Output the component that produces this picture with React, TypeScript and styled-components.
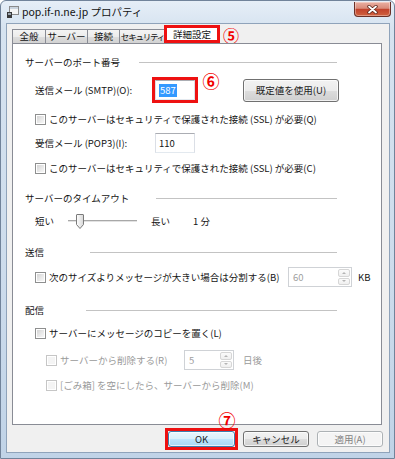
import React from "react";
import styled, { createGlobalStyle } from "styled-components";

const GlobalStyle = createGlobalStyle`
  html, body { margin: 0; padding: 0; background: #ffffff; }
  body {
    font-family: "Noto Sans CJK JP", "Noto Sans", sans-serif;
    font-size: 9.5px;
    color: #141414;
  }
`;

const Window = styled.div`
  width: 395px;
  height: 459px;
  box-sizing: border-box;
  border: 1px solid #71839a;
  border-radius: 6px 6px 0 0;
  background: linear-gradient(180deg, #e6eef7 0%, #d6e3f0 6%, #cddcec 60%, #c0d3e7 100%);
  display: flex;
  flex-direction: column;
`;

const TitleBar = styled.div`
  height: 22px;
  flex: none;
  display: flex;
  align-items: flex-start;
  padding-left: 6px;
`;

const TitleIcon = styled.svg`
  margin-top: 5px;
  flex: none;
`;

const TitleText = styled.span`
  margin-left: 3px;
  line-height: 22px;
  font-size: 10.5px;
  color: #111;
`;

const CloseButton = styled.div`
  margin-left: auto;
  margin-right: 3px;
  margin-top: 1px;
  width: 37px;
  height: 15px;
  box-sizing: border-box;
  border: 1px solid #6a3027;
  border-top: none;
  border-radius: 0 0 4px 4px;
  background: linear-gradient(180deg, #eab0a2 0%, #d98b7a 45%, #c2432c 52%, #d0623f 100%);
  box-shadow: inset 0 0 0 1px rgba(255, 255, 255, 0.35);
  display: flex;
  align-items: center;
  justify-content: center;
`;

const Client = styled.div`
  margin: 0 4px 5px 5px;
  height: 430px;
  box-sizing: border-box;
  border: 1px solid #8fa3ba;
  background: #f0f0f0;
  display: flex;
  flex-direction: column;
`;

const TabStrip = styled.div`
  height: 19px;
  flex: none;
  display: flex;
  align-items: flex-end;
  padding-left: 5px;
`;

const Tab = styled.div<{ $w: number; $tight?: boolean }>`
  width: ${(p) => p.$w}px;
  height: 14px;
  box-sizing: border-box;
  border: 1px solid #898c95;
  border-bottom: none;
  margin-right: -1px;
  background: linear-gradient(180deg, #f4f4f4 0%, #ececec 50%, #dedede 51%, #d2d2d2 100%);
  text-align: center;
  line-height: 13px;
  font-size: ${(p) => (p.$tight ? "8.5px" : "9.5px")};
  letter-spacing: ${(p) => (p.$tight ? "-1.2px" : "0")};
  white-space: nowrap;
`;

const SelectedTab = styled.div`
  width: 56px;
  height: 18px;
  box-sizing: border-box;
  margin-left: -1px;
  border: 3px solid #ee1111;
  background: #ffffff;
  text-align: center;
  line-height: 12px;
  font-size: 9.5px;
  position: relative;
  z-index: 1;
`;

const Annot = styled.span<{ $size?: number }>`
  display: inline-flex;
  justify-content: center;
  align-items: center;
  width: 18px;
  height: 18px;
  flex: none;
  color: #f20000;
  font-weight: 700;
  font-size: ${(p) => p.$size ?? 17}px;
  line-height: 1;
`;

const TabAnnot = styled(Annot)`
  margin-left: 2px;
  align-self: center;
  margin-bottom: -2px;
`;

const Panel = styled.div`
  margin-left: 5px;
  width: 370px;
  height: 382px;
  flex: none;
  box-sizing: border-box;
  border: 1px solid #898c95;
  background: #ffffff;
  display: flex;
  flex-direction: column;
`;

const Row = styled.div<{ $mt: number; $h?: number; $pl?: number }>`
  display: flex;
  align-items: center;
  margin-top: ${(p) => p.$mt}px;
  height: ${(p) => p.$h ?? 20}px;
  padding-left: ${(p) => p.$pl ?? 22}px;
  flex: none;
  white-space: nowrap;
`;

const Header = styled.div<{ $mt: number }>`
  display: flex;
  align-items: center;
  margin-top: ${(p) => p.$mt}px;
  margin-left: 12px;
  width: 312px;
  height: 12px;
  flex: none;
`;

const HeaderLabel = styled.span<{ $w: number }>`
  width: ${(p) => p.$w}px;
  flex: none;
  white-space: nowrap;
`;

const HeaderLine = styled.div`
  flex: 1;
  height: 1px;
  background: #c3c3c3;
`;

const FieldLabel = styled.span<{ $w: number; $disabled?: boolean }>`
  width: ${(p) => p.$w}px;
  flex: none;
  display: flex;
  align-items: center;
  color: ${(p) => (p.$disabled ? "#9a9a9a" : "inherit")};
`;

const RedBox = styled.div`
  box-sizing: border-box;
  border: 3px solid #ee1111;
  flex: none;
  display: flex;
  position: relative;
`;

const TextInput = styled.div<{ $w: number }>`
  width: ${(p) => p.$w}px;
  height: 20px;
  box-sizing: border-box;
  border: 1px solid #abadb3;
  border-left-color: #dbdfe6;
  border-right-color: #dbdfe6;
  border-bottom-color: #e3e9ef;
  background: #ffffff;
  display: flex;
  align-items: center;
  padding-left: 3px;
  flex: none;
`;

const Selected = styled.span`
  background: #3399ff;
  color: #ffffff;
  padding: 1px 1px;
  line-height: 11px;
`;

const NumberAnnot = styled(Annot)`
  align-self: flex-start;
  margin-top: -6px;
  margin-left: 4px;
`;

const PushButton = styled.div<{ $w: number; $h?: number; $variant?: "default" | "disabled" }>`
  width: ${(p) => p.$w}px;
  height: ${(p) => p.$h ?? 23}px;
  box-sizing: border-box;
  flex: none;
  border: 1px solid
    ${(p) => (p.$variant === "default" ? "#3c7fb1" : p.$variant === "disabled" ? "#adb2b5" : "#707070")};
  border-radius: 3px;
  background: ${(p) =>
    p.$variant === "default"
      ? "linear-gradient(180deg, #eaf6fd 0%, #d9f0fc 50%, #bee6fd 51%, #a7d9f5 100%)"
      : p.$variant === "disabled"
      ? "#f4f4f4"
      : "linear-gradient(180deg, #f2f2f2 0%, #ebebeb 50%, #dddddd 51%, #cfcfcf 100%)"};
  box-shadow: inset 0 0 0 1px rgba(255, 255, 255, 0.7);
  color: ${(p) => (p.$variant === "disabled" ? "#838383" : "#1b1b1b")};
  display: flex;
  align-items: center;
  justify-content: center;
  white-space: nowrap;
`;

const DefaultsButton = styled(PushButton)`
  margin-left: 23px;
`;

const Check = styled.span<{ $disabled?: boolean }>`
  flex: none;
  box-sizing: border-box;
  width: 11px;
  height: 11px;
  margin-right: 3px;
  border: 1px solid ${(p) => (p.$disabled ? "#c6c6c6" : "#8e8f8f")};
  background: ${(p) =>
    p.$disabled ? "#f4f4f4" : "linear-gradient(135deg, #cfcfcf 0%, #e9e9e9 55%, #fbfbfb 100%)"};
  box-shadow: inset 0 0 0 1px #ffffff;
`;

const CheckText = styled.span<{ $disabled?: boolean }>`
  color: ${(p) => (p.$disabled ? "#9a9a9a" : "inherit")};
`;

const SliderGrid = styled.div`
  display: grid;
  grid-template-columns: 33px 83px 42px auto;
  align-items: center;
  height: 100%;
`;

const Track = styled.div`
  position: relative;
  width: 69px;
  height: 20px;
  display: flex;
  align-items: center;
`;

const Groove = styled.div`
  width: 100%;
  height: 1px;
  border-top: 1px solid #a8a8a8;
  border-bottom: 1px solid #ffffff;
  background: #e2e2e2;
`;

const Thumb = styled.svg`
  position: absolute;
  left: 8px;
  top: 3px;
`;

const Spinner = styled.div<{ $w: number }>`
  width: ${(p) => p.$w}px;
  height: 20px;
  box-sizing: border-box;
  border: 1px solid #cfd2d6;
  background: #ffffff;
  display: flex;
  align-items: stretch;
  flex: none;
  padding: 1px;
`;

const SpinValue = styled.span`
  flex: 1;
  display: flex;
  align-items: center;
  padding-left: 3px;
  color: #a0a0a0;
`;

const SpinColumn = styled.div`
  width: 12px;
  display: flex;
  flex-direction: column;
  gap: 1px;
`;

const SpinButton = styled.div<{ $up?: boolean }>`
  flex: 1;
  box-sizing: border-box;
  border: 1px solid #d6d6d6;
  border-radius: 2px;
  background: linear-gradient(180deg, #fbfbfb, #efefef);
  display: flex;
  align-items: center;
  justify-content: center;

  &::after {
    content: "";
    width: 0;
    height: 0;
    border-left: 2px solid transparent;
    border-right: 2px solid transparent;
    ${(p) => (p.$up ? "border-bottom: 2px solid #b4b4b4;" : "border-top: 2px solid #b4b4b4;")}
  }
`;

const Unit = styled.span<{ $ml: number; $disabled?: boolean }>`
  margin-left: ${(p) => p.$ml}px;
  color: ${(p) => (p.$disabled ? "#9a9a9a" : "inherit")};
`;

const Footer = styled.div`
  flex: 1;
  display: flex;
  justify-content: flex-end;
  align-items: center;
  padding: 3px 6px 2px 0;
`;

const OkFrame = styled(RedBox)`
  margin-right: 5px;
`;

const FooterAnnot = styled(Annot)`
  position: absolute;
  left: 50px;
  top: -21px;
`;

const FooterGap = styled.div`
  width: 8px;
  flex: none;
`;

const CheckRow = ({
  mt,
  pl,
  disabled,
  children,
}: {
  mt: number;
  pl?: number;
  disabled?: boolean;
  children: React.ReactNode;
}) => (
  <Row $mt={mt} $pl={pl}>
    <Check $disabled={disabled} />
    <CheckText $disabled={disabled}>{children}</CheckText>
  </Row>
);

const SpinBox = ({ w, value }: { w: number; value: string }) => (
  <Spinner $w={w}>
    <SpinValue>{value}</SpinValue>
    <SpinColumn>
      <SpinButton $up />
      <SpinButton />
    </SpinColumn>
  </Spinner>
);

export default function App() {
  return (
    <>
      <GlobalStyle />
      <Window>
        <TitleBar>
          <TitleIcon width="12" height="12" viewBox="0 0 12 12">
            <rect x="2.5" y="0.5" width="9" height="8" fill="#f4f4f4" stroke="#8a8a8a" />
            <rect x="3" y="1" width="8" height="2" fill="#c9d3de" />
            <rect x="0" y="6" width="5" height="6" fill="#3a3a3a" />
            <rect x="1" y="7" width="3" height="2" fill="#9aa4ae" />
          </TitleIcon>
          <TitleText>pop.if-n.ne.jp プロパティ</TitleText>
          <CloseButton>
            <svg width="11" height="9" viewBox="0 0 11 9">
              <path d="M2 1.5 L9 7.5 M9 1.5 L2 7.5" stroke="#5c2419" strokeWidth="3.4" strokeLinecap="round" />
              <path d="M2 1.5 L9 7.5 M9 1.5 L2 7.5" stroke="#ffffff" strokeWidth="1.8" strokeLinecap="round" />
            </svg>
          </CloseButton>
        </TitleBar>

        <Client>
          <TabStrip>
            <Tab $w={34}>全般</Tab>
            <Tab $w={43}>サーバー</Tab>
            <Tab $w={33}>接続</Tab>
            <Tab $w={47} $tight>
              セキュリティ
            </Tab>
            <SelectedTab>詳細設定</SelectedTab>
            <TabAnnot $size={16}>⑤</TabAnnot>
          </TabStrip>

          <Panel>
            <Header $mt={12}>
              <HeaderLabel $w={114}>サーバーのポート番号</HeaderLabel>
              <HeaderLine />
            </Header>

            <Row $mt={9} $h={26}>
              <FieldLabel $w={117}>送信メール (SMTP)(O):</FieldLabel>
              <RedBox>
                <TextInput $w={40}>
                  <Selected>587</Selected>
                </TextInput>
              </RedBox>
              <NumberAnnot>⑥</NumberAnnot>
              <DefaultsButton $w={96}>既定値を使用(U)</DefaultsButton>
            </Row>

            <CheckRow mt={6}>このサーバーはセキュリティで保護された接続 (SSL) が必要(Q)</CheckRow>

            <Row $mt={4}>
              <FieldLabel $w={120}>受信メール (POP3)(I):</FieldLabel>
              <TextInput $w={40}>110</TextInput>
            </Row>

            <CheckRow mt={5}>このサーバーはセキュリティで保護された接続 (SSL) が必要(C)</CheckRow>

            <Header $mt={14}>
              <HeaderLabel $w={131}>サーバーのタイムアウト</HeaderLabel>
              <HeaderLine />
            </Header>

            <Row $mt={7}>
              <SliderGrid>
                <span>短い</span>
                <Track>
                  <Groove />
                  <Thumb width="8" height="15" viewBox="0 0 8 15">
                    <defs>
                      <linearGradient id="thumbFill" x1="0" y1="0" x2="1" y2="0">
                        <stop offset="0" stopColor="#ffffff" />
                        <stop offset="1" stopColor="#d6d6d6" />
                      </linearGradient>
                    </defs>
                    <path
                      d="M1 0.5 H7 Q7.5 0.5 7.5 1 V10.5 L4 14.5 L0.5 10.5 V1 Q0.5 0.5 1 0.5 Z"
                      fill="url(#thumbFill)"
                      stroke="#7a7a7a"
                    />
                  </Thumb>
                </Track>
                <span>長い</span>
                <span>1 分</span>
              </SliderGrid>
            </Row>

            <Header $mt={15}>
              <HeaderLabel $w={65}>送信</HeaderLabel>
              <HeaderLine />
            </Header>

            <Row $mt={9}>
              <FieldLabel $w={253}>
                <Check />
                <CheckText>次のサイズよりメッセージが大きい場合は分割する(B)</CheckText>
              </FieldLabel>
              <SpinBox w={64} value="60" />
              <Unit $ml={6}>KB</Unit>
            </Row>

            <Header $mt={17}>
              <HeaderLabel $w={61}>配信</HeaderLabel>
              <HeaderLine />
            </Header>

            <CheckRow mt={7}>サーバーにメッセージのコピーを置く(L)</CheckRow>

            <Row $mt={7} $pl={33}>
              <FieldLabel $w={138} $disabled>
                <Check $disabled />
                サーバーから削除する(R)
              </FieldLabel>
              <SpinBox w={50} value="5" />
              <Unit $ml={9} $disabled>
                日後
              </Unit>
            </Row>

            <CheckRow mt={5} pl={33} disabled>
              [ごみ箱] を空にしたら、サーバーから削除(M)
            </CheckRow>
          </Panel>

          <Footer>
            <OkFrame>
              <PushButton $w={67} $h={16} $variant="default">
                OK
              </PushButton>
              <FooterAnnot>⑦</FooterAnnot>
            </OkFrame>
            <PushButton $w={66} $h={16}>
              キャンセル
            </PushButton>
            <FooterGap />
            <PushButton $w={66} $h={16} $variant="disabled">
              適用(A)
            </PushButton>
          </Footer>
        </Client>
      </Window>
    </>
  );
}
